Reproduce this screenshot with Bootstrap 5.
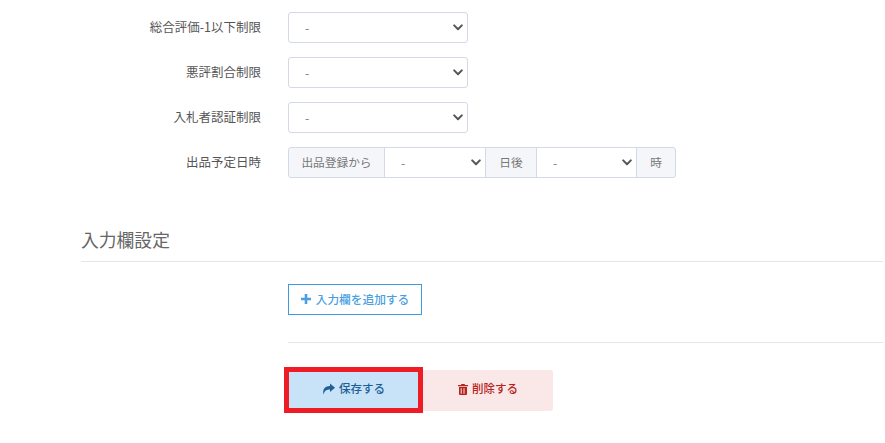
<!DOCTYPE html>
<html lang="ja">
<head>
  <meta charset="UTF-8" />
  <meta name="viewport" content="width=device-width, initial-scale=1.0"/>
  <title>入力欄設定</title>
  <link rel="stylesheet" href="https://cdn.jsdelivr.net/npm/bootstrap@5.3.0/dist/css/bootstrap.min.css">
  <style>
    body {
      background: #fff;
      font-family: "Noto Sans CJK JP", "Liberation Sans", sans-serif;
      font-size: 12px;
      color: #555;
      overflow: hidden;
    }
    .page-wrap { padding: 12px 2px 0 81px; }
    .form-line { display: flex; align-items: center; height: 31px; margin-bottom: 14px; }
    .form-name { width: 180px; text-align: right; margin-right: 27px; font-size: 12.5px; font-weight: 400; color: #555; }
    .form-select {
      --chev: url("data:image/svg+xml,%3csvg xmlns='http://www.w3.org/2000/svg' viewBox='0 0 10 7'%3e%3cpath fill='none' stroke='%23555' stroke-linecap='round' stroke-linejoin='round' stroke-width='2' d='M1.200 1.400L5 5.200l3.800-3.800'/%3e%3c/svg%3e");
    }
    .form-select.pick {
      width: 180px; height: 31px; padding: 0 28px 0 16px; font-size: 12px; color: #777;
      border-color: #d3d9e6; border-radius: 3px;
      background-image: var(--chev); background-size: 10px 7px; background-position: right 4px center;
    }
    .input-group.when { width: 388px; height: 31px; flex-wrap: nowrap; }
    .when .input-group-text {
      font-size: 11.7px; color: #777; background: #f4f6f9; border-color: #d3d9e6; padding: 0 0 2px; border-radius: 3px;
      justify-content: center; flex: none;
    }
    .when .form-select {
      font-size: 12px; color: #777; border-color: #d3d9e6; height: 31px; padding: 0 28px 0 16px;
      background-image: var(--chev); background-size: 10px 7px; background-position: right 4px center;
    }
    .when .txt-from { width: 97px; }
    .when .txt-days { width: 52px; }
    .when .txt-hour { width: 40px; }
    .when .sel-a { width: 102px; flex: 0 0 102px; }
    .when .sel-b { width: 101px; flex: 0 0 101px; }
    .section-title { font-size: 17.8px; font-weight: 400; color: #666; margin: 48px 0 0; line-height: 27px; height: 36px; border-bottom: 1px solid #e6e6e6; }
    .section-body { padding: 22px 0 0 207px; }
    .btn-add {
      width: 134px; height: 31px; padding: 0 0 2px; font-size: 11.7px; font-weight: 500; color: #4a9fe3;
      border: 1px solid #3f9ae2; border-radius: 0; background: #fff;
      display: flex; align-items: center; justify-content: center; gap: 5px;
    }
    .rule-line { border-top: 1px solid #e6e6e6; margin: 27px 0 0; opacity: 1; }
    .btn-row { display: flex; align-items: center; margin: 24px 0 0 -4px; }
    .save-frame { border: 5px solid #ee1c25; width: 139px; height: 46px; }
    .btn-save {
      width: 100%; height: 100%; border: 0; border-radius: 0; padding: 0 0 2px; font-size: 11.5px; font-weight: 500;
      color: #1d5f96; background: #c8e2f7; display: flex; align-items: center; justify-content: center; gap: 4px;
    }
    .btn-del {
      width: 130px; height: 41px; border: 0; border-radius: 0 3px 3px 0; padding: 0 0 2px; font-size: 11.5px; font-weight: 500;
      color: #b5231f; background: #fae7e7; display: flex; align-items: center; justify-content: center; gap: 4px;
    }
  </style>
</head>
<body>
  <div class="page-wrap">
    <div class="form-line">
      <div class="form-name">総合評価-1以下制限</div>
      <select class="form-select pick"><option>-</option></select>
    </div>
    <div class="form-line">
      <div class="form-name">悪評割合制限</div>
      <select class="form-select pick"><option>-</option></select>
    </div>
    <div class="form-line">
      <div class="form-name">入札者認証制限</div>
      <select class="form-select pick"><option>-</option></select>
    </div>
    <div class="form-line">
      <div class="form-name">出品予定日時</div>
      <div class="input-group when">
        <span class="input-group-text txt-from">出品登録から</span>
        <select class="form-select sel-a"><option>-</option></select>
        <span class="input-group-text txt-days">日後</span>
        <select class="form-select sel-b"><option>-</option></select>
        <span class="input-group-text txt-hour">時</span>
      </div>
    </div>

    <h2 class="section-title">入力欄設定</h2>
    <div class="section-body">
      <button type="button" class="btn btn-add">
        <svg width="10" height="10" viewBox="0 0 10 10"><path d="M3.700 0h2.600v3.700H10v2.600H6.300V10H3.700V6.300H0V3.700h3.700z" fill="currentColor"/></svg>
        入力欄を追加する
      </button>
      <div class="rule-line"></div>
      <div class="btn-row">
        <div class="save-frame">
          <button type="button" class="btn btn-save">
            <svg width="13" height="12" viewBox="0 0 13 11"><path d="M8 0l5 4.200L8 8.400V6C4.800 6 2.500 6.700 1.700 11 .2 6.500 2.200 2.600 8 2.400z" fill="currentColor"/></svg>
            保存する
          </button>
        </div>
        <button type="button" class="btn btn-del">
          <svg width="10" height="11" viewBox="0 0 10 11"><path d="M3.500 0h3l.6 1H10v1.200H0V1h2.900zM1 3h8v7a1 1 0 0 1-1 1H2a1 1 0 0 1-1-1zm1.700 1.300v5.400h1V4.300zm2.800 0v5.400h1V4.300z" fill="currentColor" fill-rule="evenodd"/></svg>
          削除する
        </button>
      </div>
    </div>
  </div>
  <script src="https://cdn.jsdelivr.net/npm/bootstrap@5.3.0/dist/js/bootstrap.bundle.min.js"></script>
</body>
</html>
